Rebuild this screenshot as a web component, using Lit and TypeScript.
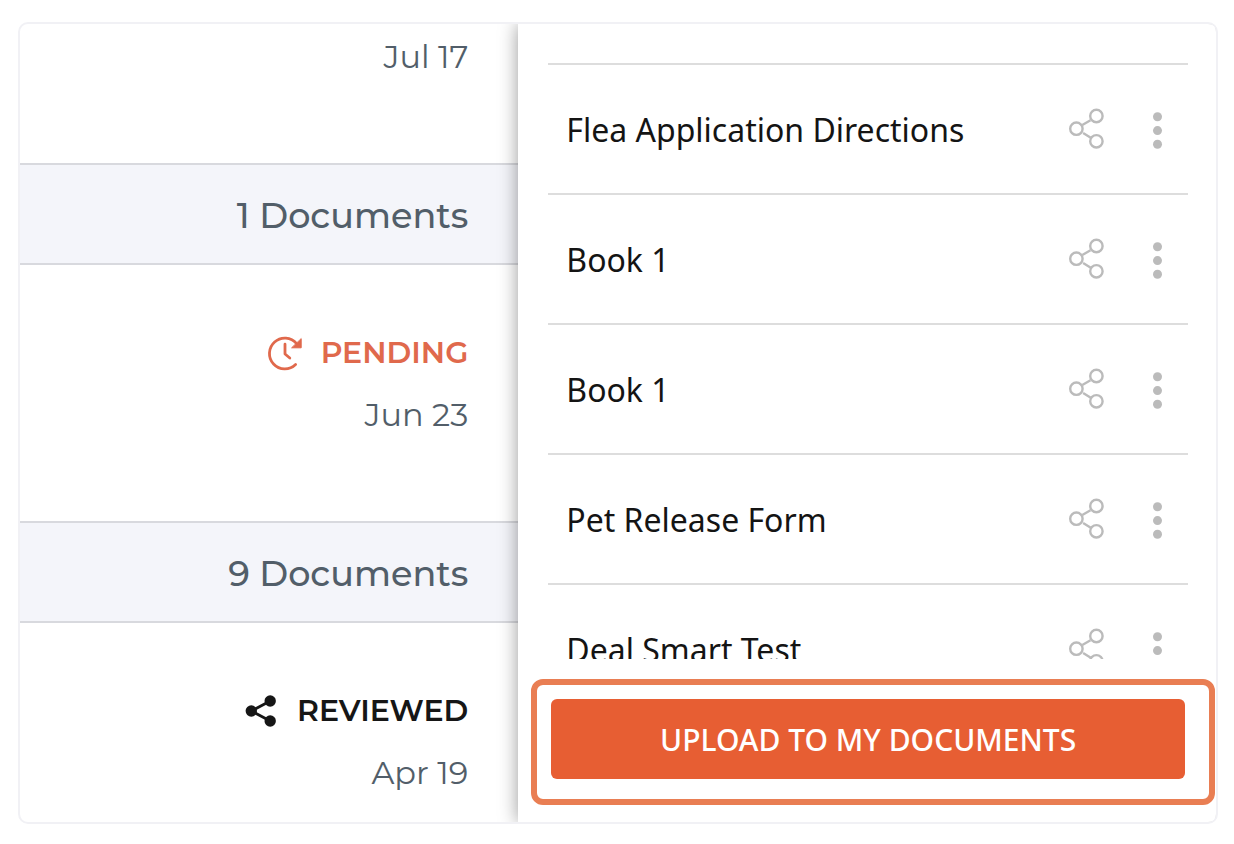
import { LitElement, html, css, svg } from "lit";
import { customElement, property } from "lit/decorators.js";

const outlineShare = svg`
  <svg width="40" height="44" viewBox="0 0 40 44" fill="none" stroke="#bbbbbb" stroke-width="2.4" aria-hidden="true">
    <circle cx="8.4" cy="21.7" r="6.2" />
    <circle cx="28.4" cy="9" r="6.2" />
    <circle cx="28.4" cy="34.3" r="6.2" />
    <path d="M14.3 18 L22.5 13.2 M15.1 26 L22.8 30.8" />
  </svg>`;

const kebab = svg`
  <svg width="12" height="44" viewBox="0 0 12 44" fill="#bbbbbb" aria-hidden="true">
    <circle cx="5.5" cy="9.8" r="4.5" />
    <circle cx="5.5" cy="23.6" r="4.5" />
    <circle cx="5.5" cy="37.3" r="4.5" />
  </svg>`;

const pendingIcon = svg`
  <svg width="36" height="36" viewBox="0 0 36 36" fill="none" stroke="#e0694c" stroke-width="2.8" stroke-linecap="round" stroke-linejoin="round" aria-hidden="true">
    <path d="M29.6 8.6 A15.4 15.4 0 1 0 28.6 29.6" />
    <path d="M18 9.2 V19 L22.8 23" />
    <path d="M34.2 4 V12.8 H25 Z" fill="#e0694c" stroke-width="1" />
  </svg>`;

const sharedIcon = svg`
  <svg width="32" height="32" viewBox="0 0 32 32" fill="#161616" aria-hidden="true">
    <path d="M25.2 6 L6.3 16 L25.2 26" fill="none" stroke="#161616" stroke-width="2.8" />
    <circle cx="6.3" cy="16" r="5.7" />
    <circle cx="25.2" cy="6" r="5.7" />
    <circle cx="25.2" cy="26" r="5.7" />
  </svg>`;

@customElement("document-row")
class DocumentRow extends LitElement {
  @property() name = "";

  static styles = css`
    :host {
      display: flex;
      align-items: center;
      box-sizing: border-box;
      height: 130px;
      padding: 0 24px 0 18px;
      border-top: 2px solid #dddddd;
    }
    .name {
      flex: 1;
      padding-top: 2px;
      font-size: 32px;
      line-height: 44px;
      color: #141414;
      white-space: nowrap;
    }
    .action {
      display: flex;
      padding: 0;
      border: 0;
      background: none;
      cursor: pointer;
    }
    .actions {
      display: flex;
      gap: 44px;
    }
  `;

  render() {
    return html`
      <span class="name">${this.name}</span>
      <div class="actions">
        <button class="action" aria-label="Share ${this.name}">${outlineShare}</button>
        <button class="action" aria-label="More options for ${this.name}">${kebab}</button>
      </div>
    `;
  }
}

@customElement("app-root")
class AppRoot extends LitElement {
  documents = [
    "Flea Application Directions",
    "Book 1",
    "Book 1",
    "Pet Release Form",
    "Deal Smart Test",
  ];

  static styles = css`
    :host {
      display: flex;
      box-sizing: border-box;
      height: 100vh;
      padding: 22px 16px 20px 18px;
      background: #ffffff;
      font-family: "Noto Sans", sans-serif;
    }
    .card {
      flex: 1;
      display: grid;
      grid-template-columns: 5fr 7fr;
      grid-template-rows: minmax(0, 1fr);
      border: 2px solid #f1f1f5;
      border-radius: 10px;
      overflow: hidden;
    }
    .timeline {
      display: flex;
      flex-direction: column;
      min-height: 0;
      overflow: hidden;
      font-family: Montserrat, Inter, sans-serif;
      text-align: right;
      color: #525e69;
    }
    .group {
      flex: none;
      margin: 0;
      padding: 29px 50px 25px;
      border: solid #d8d9de;
      border-width: 2px 0;
      background: #f4f5fa;
      font-size: 35px;
      font-weight: 500;
      line-height: 44px;
    }
    .entry {
      flex: none;
      display: flex;
      flex-direction: column;
      align-items: flex-end;
      gap: 18px;
      padding: 66px 50px 84px;
    }
    .entry.scrolled {
      padding-top: 11px;
    }
    .status {
      display: flex;
      align-items: center;
      gap: 18px;
      font-size: 30px;
      font-weight: 600;
      line-height: 44px;
    }
    .pending {
      color: #e0694c;
    }
    .reviewed {
      gap: 20px;
      color: #161616;
    }
    .date {
      font-size: 32px;
      font-weight: 400;
      line-height: 44px;
    }
    .panel {
      display: flex;
      flex-direction: column;
      min-height: 0;
      background: #ffffff;
      box-shadow: 0 0 18px rgba(0, 0, 0, 0.4);
    }
    .list {
      flex: 1;
      min-height: 0;
      margin: 0;
      padding: 39px 28px 0 30px;
      overflow: hidden;
      list-style: none;
    }
    .footer {
      margin: 20px 1px 17px 13px;
      padding: 14px 24px 20px 14px;
      border: 6px solid #e97e53;
      border-radius: 12px;
    }
    .upload {
      display: block;
      width: 100%;
      padding: 19px 18px 17px;
      border: 0;
      border-radius: 6px;
      background: #e75e33;
      color: #ffffff;
      font: 500 30px/44px "Noto Sans", sans-serif;
      cursor: pointer;
    }
  `;

  render() {
    return html`
      <main class="card">
        <section class="timeline" aria-label="Requests">
          <div class="entry scrolled"><time class="date">Jul 17</time></div>
          <h2 class="group">1 Documents</h2>
          <div class="entry">
            <span class="status pending">${pendingIcon} PENDING</span>
            <time class="date">Jun 23</time>
          </div>
          <h2 class="group">9 Documents</h2>
          <div class="entry">
            <span class="status reviewed">${sharedIcon} REVIEWED</span>
            <time class="date">Apr 19</time>
          </div>
        </section>
        <aside class="panel" aria-label="My documents">
          <ul class="list">
            ${this.documents.map((name) => html`<li><document-row .name=${name}></document-row></li>`)}
          </ul>
          <div class="footer">
            <button class="upload">UPLOAD TO MY DOCUMENTS</button>
          </div>
        </aside>
      </main>
    `;
  }
}
